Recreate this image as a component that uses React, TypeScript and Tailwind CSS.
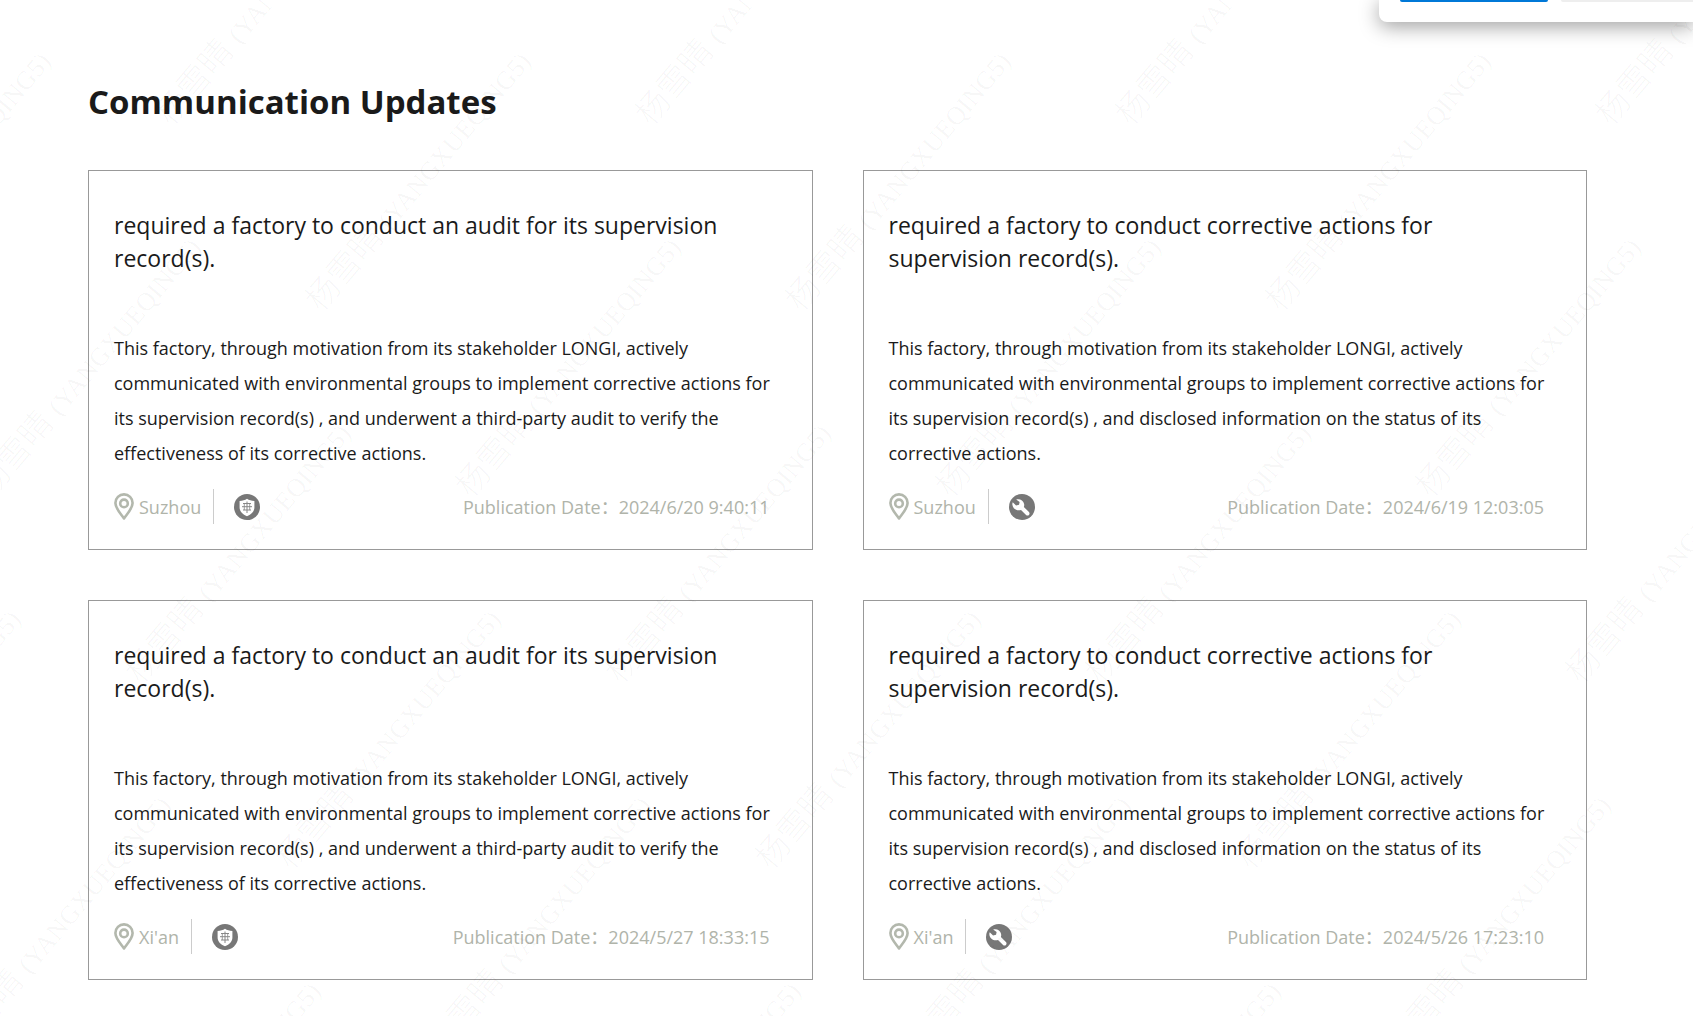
type Update = {
  id: number;
  action: "audit" | "corrective";
  city: string;
  date: string;
};

const updates: Update[] = [
  { id: 1, action: "audit", city: "Suzhou", date: "2024/6/20 9:40:11" },
  { id: 2, action: "corrective", city: "Suzhou", date: "2024/6/19 12:03:05" },
  { id: 3, action: "audit", city: "Xi'an", date: "2024/5/27 18:33:15" },
  { id: 4, action: "corrective", city: "Xi'an", date: "2024/5/26 17:23:10" },
];

const copy = {
  audit: {
    title: "required a factory to conduct an audit for its supervision record(s).",
    body: "This factory, through motivation from its stakeholder LONGI, actively communicated with environmental groups to implement corrective actions for its supervision record(s) , and underwent a third-party audit to verify the effectiveness of its corrective actions.",
  },
  corrective: {
    title:
      "required a factory to conduct corrective actions for supervision record(s).",
    body: "This factory, through motivation from its stakeholder LONGI, actively communicated with environmental groups to implement corrective actions for its supervision record(s) , and disclosed information on the status of its corrective actions.",
  },
};

function PinIcon() {
  return (
    <svg
      className="h-[27px] w-5 shrink-0"
      viewBox="0 0 20 27"
      fill="none"
      stroke="#b3b8ad"
      strokeWidth={2.6}
      aria-hidden="true"
    >
      <path
        strokeLinejoin="round"
        d="M10 25.4C7.4 21.6 1.4 15.6 1.4 10a8.6 8.6 0 0 1 17.2 0c0 5.6-6 11.6-8.600 15.4z"
      />
      <circle cx="10" cy="10.4" r="3.8" />
    </svg>
  );
}

function AuditIcon() {
  return (
    <svg className="size-[26px] shrink-0" viewBox="0 0 26 26" aria-hidden="true">
      <circle cx="13" cy="13" r="13" fill="#777" />
      <path
        fill="#fff"
        d="M13 4.800c2 1.400 4.500 2.100 7.400 2.200v6.500c0 4-2.900 6.900-7.400 8.700-4.500-1.800-7.400-4.700-7.400-8.700V7c2.900-.1 5.400-.8 7.400-2.200z"
      />
      <g fill="none" stroke="#888">
        <path d="M9 9.500h8M13 7.500v11.500M9 16h8M8 12.700h10" />
        <path strokeWidth={0.8} d="M10.300 9.500v6.500M15.700 9.500v6.500" />
      </g>
    </svg>
  );
}

function WrenchIcon() {
  return (
    <svg className="size-[26px] shrink-0" viewBox="0 0 26 26" aria-hidden="true">
      <circle cx="13" cy="13" r="13" fill="#777" />
      <path
        fill="#fff"
        transform="translate(-2.6 -1.6) scale(1.15)"
        d="M8.500 6.200c2.900-1 6.300.7 6.900 3.800.2 1 .1 1.900-.2 2.700l4.400 4.400c.7.700.7 1.800 0 2.500s-1.800.7-2.500 0l-4.400-4.400c-3.300 1.200-7.100-.8-7.500-4.500-.1-.8 0-1.500.3-2.200l2.900 2.800 2.600-.5.500-2.500z"
      />
    </svg>
  );
}

function UpdateCard({ update }: { update: Update }) {
  const { title, body } = copy[update.action];

  return (
    <article className="flex flex-col border border-[#999] pt-[38px] pr-[34px] pb-[25px] pl-[25px]">
      <h2 className="text-[23px] leading-[33px] text-[#1a1a1a]">{title}</h2>
      <p className="mt-14 text-lg leading-[35px] text-[#1a1a1a]">{body}</p>
      <div className="mt-[18px] flex items-center justify-between pr-2 text-lg text-[#b0b4aa]">
        <div className="flex h-[35px] items-center">
          <PinIcon />
          <span className="ml-[5px]">{update.city}</span>
          <span className="mr-5 ml-3 h-full w-px bg-[#ccc]" />
          {update.action === "audit" ? <AuditIcon /> : <WrenchIcon />}
        </div>
        <p>Publication Date：{update.date}</p>
      </div>
    </article>
  );
}

// Slanted name repeated on a staggered lattice above the page
function Watermark() {
  const marks = Array.from({ length: 7 }, (_, row) =>
    Array.from({ length: 9 }, (_, col) => ({
      x: 173 + row * 150 + (col - 4) * 480,
      y: 108 + row * 186,
    }))
  )
    .flat()
    .filter(({ x }) => x > -215 && x < 1720);

  return (
    <svg
      className="pointer-events-none absolute inset-0 size-full"
      aria-hidden="true"
    >
      {marks.map(({ x, y }) => (
        <text
          key={`${x}-${y}`}
          transform={`translate(${x} ${y}) rotate(-50)`}
          x={-16}
          y={11}
          className="fill-black/4 font-['Liberation_Serif','Noto_Sans_CJK_SC',serif]"
        >
          <tspan className="text-[33px] font-light">杨雪晴 </tspan>
          <tspan className="text-[26px]">(YANGXUEQING5)</tspan>
        </text>
      ))}
    </svg>
  );
}

function PopupEdge() {
  return (
    <div className="absolute top-0 right-0 flex h-[22px] w-[314px] gap-[13px] rounded-bl-lg bg-white pl-[21px] shadow-[0_4px_20px_rgba(0,0,0,0.4)]">
      <div className="h-0.5 w-[148px] rounded-b-sm bg-[#0078d7]" />
      <div className="h-0.5 flex-1 rounded-bl-sm bg-[#eee]" />
    </div>
  );
}

export default function App() {
  return (
    <div className="relative min-h-screen overflow-hidden bg-white font-['Open_Sans','Noto_Sans_CJK_SC',sans-serif]">
      <main className="pt-[79px] pr-[106px] pb-9 pl-[88px]">
        <h1 className="text-[33px] leading-[46px] font-bold text-[#1a1a1a]">
          Communication Updates
        </h1>
        <div className="mt-[45px] grid grid-cols-2 gap-[50px]">
          {updates.map((update) => (
            <UpdateCard key={update.id} update={update} />
          ))}
        </div>
      </main>
      <Watermark />
      <PopupEdge />
    </div>
  );
}
